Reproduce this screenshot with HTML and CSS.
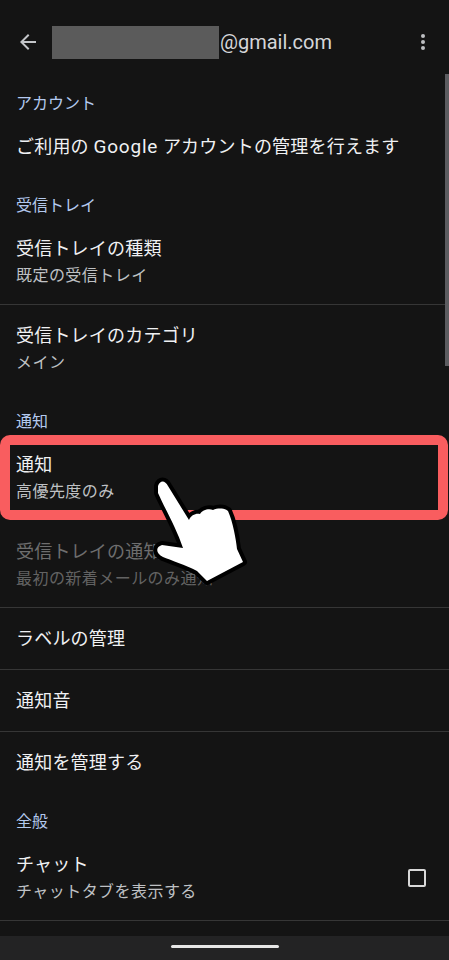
FILE: index.html
```html
<!DOCTYPE html>
<html lang="ja">
<head>
    <meta charset="UTF-8">
    <meta name="viewport" content="width=device-width, initial-scale=1.0">
    <title>Gmail 設定</title>
    <link rel="stylesheet" href="styles.css">
</head>
<body>
    <div class="phone">
        <header class="appbar">
            <svg class="back" viewBox="0 0 24 24" width="24" height="24"><path d="M20 11H7.8l5.6-5.6L12 4l-8 8 8 8 1.4-1.4L7.8 13H20z"/></svg>
            <div class="account"><span class="mask"></span><span>@gmail.com</span></div>
            <svg class="more" viewBox="0 0 24 24" width="24" height="24"><circle cx="12" cy="6" r="2"/><circle cx="12" cy="12" r="2"/><circle cx="12" cy="18" r="2"/></svg>
        </header>

        <main class="settings">
            <h2 class="section first">アカウント</h2>
            <div class="row single plain"><p class="title">ご利用の <span class="brand">Google</span> アカウントの管理を行えます</p></div>

            <h2 class="section">受信トレイ</h2>
            <div class="row"><p class="title">受信トレイの種類</p><p class="sub">既定の受信トレイ</p></div>
            <div class="row plain"><p class="title">受信トレイのカテゴリ</p><p class="sub">メイン</p></div>

            <h2 class="section">通知</h2>
            <div class="row plain"><p class="title">通知</p><p class="sub">高優先度のみ</p></div>
            <div class="row dim"><p class="title">受信トレイの通知</p><p class="sub">最初の新着メールのみ通知</p></div>
            <div class="row single"><p class="title">ラベルの管理</p></div>
            <div class="row single"><p class="title">通知音</p></div>
            <div class="row single plain"><p class="title">通知を管理する</p></div>

            <h2 class="section">全般</h2>
            <div class="row check">
                <div><p class="title">チャット</p><p class="sub">チャットタブを表示する</p></div>
                <span class="box"></span>
            </div>
        </main>

        <div class="scrollbar"></div>
        <div class="highlight"></div>
        <svg class="hand" viewBox="0 0 100 116" width="100" height="116">
            <path d="M8 9 C10 3 15 3 18 9 L39 43 C41 38 46 36 50 37 C52 33 59 31 63 33 C68 31 74 31 78 34 C83 45 86 63 87 72 L93 85 L57 104 L47 94 C36 88 20 83 13 80 C6 77 5 70 12 68 L33 71 C26 50 14 30 8 16 Z"/>
        </svg>

        <nav class="navbar"><span class="pill"></span></nav>
    </div>
</body>
</html>
```

FILE: styles.css
```css
* {
    box-sizing: border-box;
}

body {
    margin: 0;
    background: #141414;
    font-family: Roboto, "Noto Sans CJK JP", sans-serif;
}

.phone {
    position: relative;
    width: 449px;
    height: 960px;
    overflow: hidden;
    background: #141414;
    display: flex;
    flex-direction: column;
}

.appbar {
    height: 84px;
    margin-bottom: 1px;
    flex: none;
    display: flex;
    align-items: center;
    padding: 0 14px 0 16px;
    color: #d5d6d9;
}

.back {
    fill: #c4c6c9;
    flex: none;
}

.account {
    flex: 1;
    display: flex;
    align-items: center;
    margin-left: 12px;
    font-size: 20px;
}

.mask {
    width: 167px;
    height: 33px;
    background: #5b5b5b;
    margin-right: 1px;
}

.more {
    fill: #bdbfc2;
    flex: none;
}

.settings {
    flex: 1;
    min-height: 0;
}

.section {
    margin: 0;
    padding: 18px 16px 0;
    font-size: 16px;
    line-height: 24px;
    font-weight: 400;
    color: #b3c9ee;
}

.section.first {
    padding-top: 7px;
}

.row {
    padding: 17px 16px 15px;
    border-bottom: 1px solid #363636;
}

.row.plain {
    border-bottom-color: transparent;
}

.row.single {
    padding-bottom: 17px;
}

.row.single.plain {
    padding-bottom: 15px;
}

.title,
.sub {
    margin: 0;
}

.title {
    font-size: 18px;
    line-height: 27px;
    letter-spacing: 0.2px;
    color: #f0f1f3;
}

.brand {
    font-size: 19px;
    letter-spacing: 0.8px;
}

.sub {
    font-size: 16px;
    line-height: 27px;
    letter-spacing: 0.45px;
    color: #bfc1c4;
}

.dim .title {
    color: #6e6e6e;
}

.dim .sub {
    color: #636363;
}

.check {
    display: flex;
    justify-content: space-between;
    align-items: center;
    padding-right: 23px;
}

.box {
    width: 18px;
    height: 18px;
    border: 2px solid #d8d8d8;
    border-radius: 2px;
}

.scrollbar {
    position: absolute;
    top: 74px;
    right: 0;
    width: 4px;
    height: 292px;
    background: #5c5c60;
}

.highlight {
    position: absolute;
    top: 435px;
    left: 0;
    width: 448px;
    height: 85px;
    border: 10px solid #f95d5f;
    border-radius: 10px;
}

.hand {
    position: absolute;
    left: 150px;
    top: 477px;
}

.hand path {
    fill: #fff;
    stroke: #000;
    stroke-width: 8;
    stroke-linejoin: round;
    paint-order: stroke;
}

.navbar {
    position: absolute;
    left: 0;
    right: 0;
    bottom: 0;
    height: 24px;
    background: #232324;
    display: flex;
    justify-content: center;
    padding-top: 9px;
}

.pill {
    width: 108px;
    height: 3px;
    border-radius: 2px;
    background: #e6e6e6;
}
```
